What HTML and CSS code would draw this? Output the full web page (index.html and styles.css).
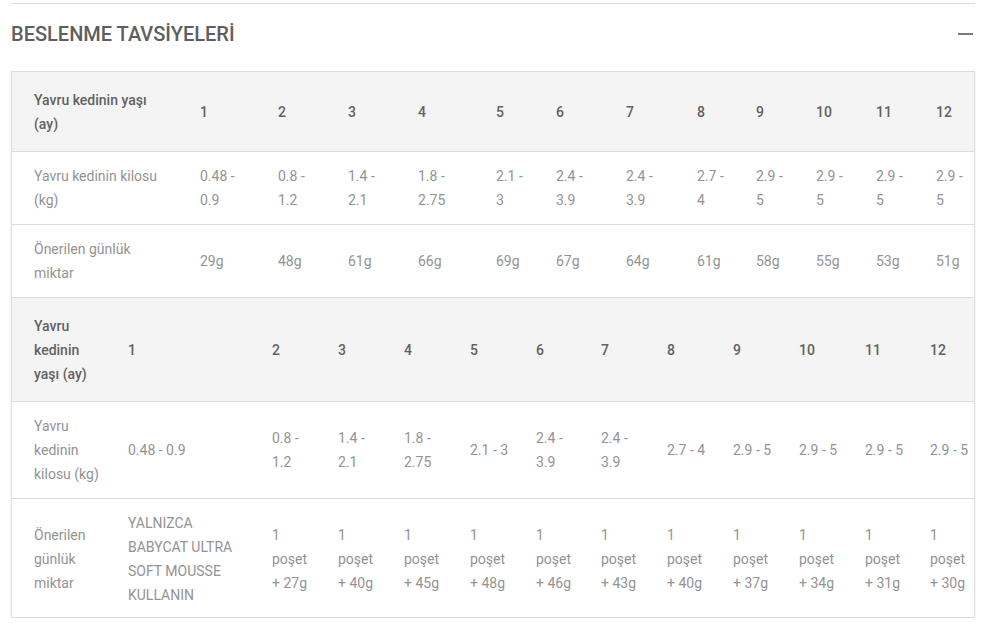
FILE: index.html
```html
<!DOCTYPE html>
<html lang="tr">
<head>
<meta charset="utf-8">
<title>Beslenme Tavsiyeleri</title>
<link rel="stylesheet" href="styles.css">
</head>
<body>
<section class="accordion">
  <div class="accordion-head">
    <h2 class="accordion-title">BESLENME TAVSİYELERİ</h2>
    <span class="accordion-toggle" aria-hidden="true"></span>
  </div>
  <div class="table-box">
    <table class="feed feed-a">
      <colgroup>
        <col class="c-label"><col class="w78"><col class="w70"><col class="w70"><col class="w78"><col class="w60"><col class="w70"><col class="w71"><col class="w59"><col class="w60"><col class="w60"><col class="w60"><col class="w60">
      </colgroup>
      <tr class="head">
        <th>Yavru kedinin yaşı (ay)</th><th>1</th><th>2</th><th>3</th><th>4</th><th>5</th><th>6</th><th>7</th><th>8</th><th>9</th><th>10</th><th>11</th><th>12</th>
      </tr>
      <tr>
        <td>Yavru kedinin kilosu (kg)</td><td>0.48 - 0.9</td><td>0.8 - 1.2</td><td>1.4 - 2.1</td><td>1.8 - 2.75</td><td>2.1 - 3</td><td>2.4 - 3.9</td><td>2.4 - 3.9</td><td>2.7 - 4</td><td>2.9 - 5</td><td>2.9 - 5</td><td>2.9 - 5</td><td>2.9 - 5</td>
      </tr>
      <tr>
        <td>Önerilen günlük miktar</td><td>29g</td><td>48g</td><td>61g</td><td>66g</td><td>69g</td><td>67g</td><td>64g</td><td>61g</td><td>58g</td><td>55g</td><td>53g</td><td>51g</td>
      </tr>
    </table>
    <table class="feed feed-b">
      <colgroup>
        <col class="c-label2"><col class="w144"><col class="w66"><col class="w66"><col class="w66"><col class="w66"><col class="w65"><col class="w66"><col class="w66"><col class="w66"><col class="w66"><col class="w65"><col class="w66">
      </colgroup>
      <tr class="head">
        <th>Yavru kedinin yaşı (ay)</th><th>1</th><th>2</th><th>3</th><th>4</th><th>5</th><th>6</th><th>7</th><th>8</th><th>9</th><th>10</th><th>11</th><th>12</th>
      </tr>
      <tr>
        <td>Yavru kedinin kilosu (kg)</td><td>0.48 - 0.9</td><td>0.8 - 1.2</td><td>1.4 - 2.1</td><td>1.8 - 2.75</td><td>2.1 - 3</td><td>2.4 - 3.9</td><td>2.4 - 3.9</td><td>2.7 - 4</td><td>2.9 - 5</td><td>2.9 - 5</td><td>2.9 - 5</td><td>2.9 - 5</td>
      </tr>
      <tr class="last">
        <td>Önerilen günlük miktar</td><td>YALNIZCA BABYCAT ULTRA SOFT MOUSSE KULLANIN</td><td>1 poşet + 27g</td><td>1 poşet + 40g</td><td>1 poşet + 45g</td><td>1 poşet + 48g</td><td>1 poşet + 46g</td><td>1 poşet + 43g</td><td>1 poşet + 40g</td><td>1 poşet + 37g</td><td>1 poşet + 34g</td><td>1 poşet + 31g</td><td>1 poşet + 30g</td>
      </tr>
    </table>
  </div>
</section>
</body>
</html>
```

FILE: styles.css
```css
* { box-sizing: border-box; }

body {
  margin: 0;
  background: #ffffff;
  font-family: Roboto, "Noto Sans", "DejaVu Sans", sans-serif;
  color: #8a8a8a;
}

.accordion {
  margin: 3px 21px 0 11px;
  border-top: 1px solid #dcdcdc;
}

.accordion-head {
  height: 60px;
  display: flex;
  align-items: center;
  justify-content: space-between;
  margin-bottom: 7px;
}

.accordion-title {
  margin: 0;
  font-size: 20px;
  font-weight: 500;
  color: #5e5e5e;
}

.accordion-toggle {
  width: 15px;
  height: 2px;
  background: #7a7a7a;
  margin-right: 2px;
}

.table-box {
  border: 1px solid #dcdcdc;
  overflow: hidden;
  box-shadow: 0 1px 2px rgba(0, 0, 0, 0.08);
}

.feed {
  border-collapse: collapse;
  table-layout: fixed;
  width: 972px;
  font-size: 14px;
  line-height: 24px;
}

.feed th,
.feed td {
  text-align: left;
  vertical-align: middle;
  padding: 12px;
  border-bottom: 1px solid #dcdcdc;
  font-weight: 400;
  color: #939393;
}

.feed tr.head th {
  background: #f4f4f4;
  color: #626262;
  font-weight: 500;
  padding-top: 16px;
  padding-bottom: 15px;
}

.feed tr.last td {
  border-bottom: 0;
  padding-bottom: 10px;
}

.feed th:first-child,
.feed td:first-child {
  padding-left: 22px;
}

.feed-a th:first-child,
.feed-a td:first-child {
  padding-right: 22px;
}

.c-label { width: 176px; }
.c-label2 { width: 104px; }
.w144 { width: 144px; }
.w78 { width: 78px; }
.w71 { width: 71px; }
.w70 { width: 70px; }
.w66 { width: 66px; }
.w65 { width: 65px; }
.w60 { width: 60px; }
.w59 { width: 59px; }
```
